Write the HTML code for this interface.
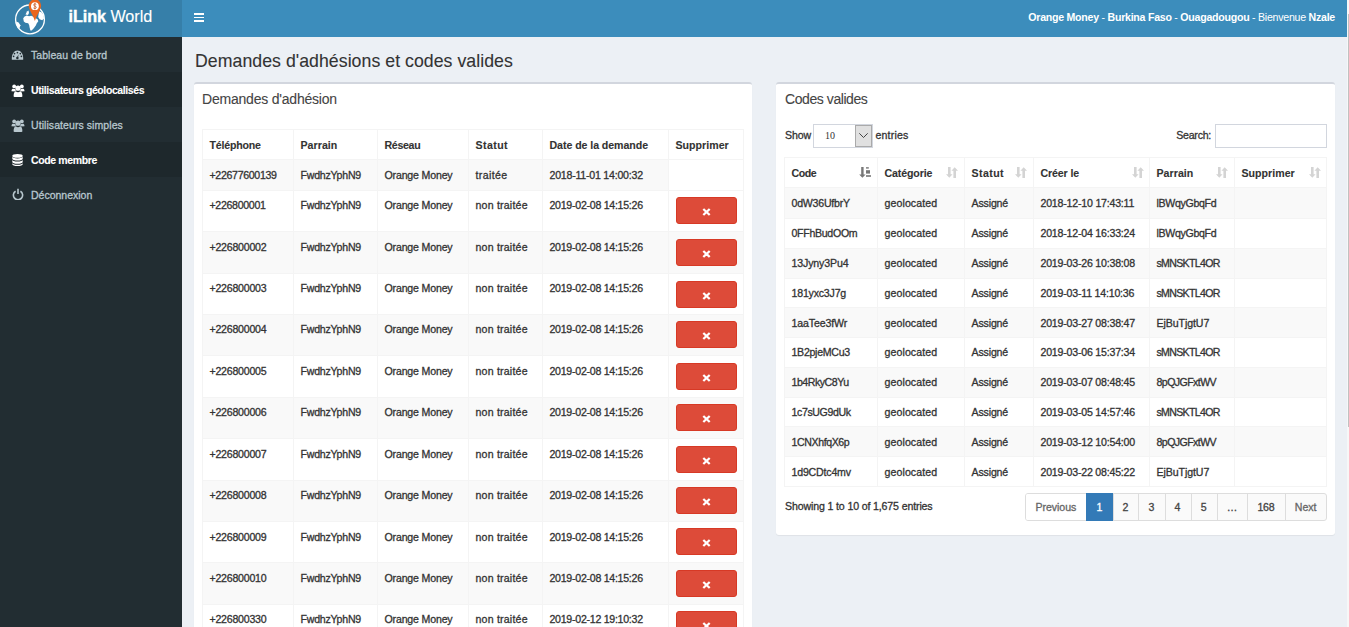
<!DOCTYPE html>
<html><head><meta charset="utf-8"><title>iLink World</title>
<style>
html,body{margin:0;padding:0;width:1349px;height:627px;overflow:hidden;background:#ecf0f5;font-family:"Liberation Sans", sans-serif}
.t{position:absolute;white-space:nowrap;-webkit-text-stroke:0.3px currentColor}
.t b{-webkit-text-stroke:0}
</style></head><body>
<div style="position:absolute;left:0px;top:0px;width:182px;height:37px;background:#367fa9"></div><div style="position:absolute;left:182px;top:0px;width:1165px;height:37px;background:#3c8dbc"></div><div style="position:absolute;left:1347px;top:0px;width:2px;height:627px;background:#f7f7f7"></div><div style="position:absolute;left:1348px;top:14px;width:1px;height:413px;background:#c1c1c1"></div><svg style="position:absolute;left:0px;top:0px" width="60" height="37" viewBox="0 0 60 37">
<circle cx="30" cy="19.4" r="14.4" fill="none" stroke="#fff" stroke-width="1.3"/>
<path d="M23.2 18.2 L24.6 16.4 L26.8 15.6 L29 16.2 L31.2 15.8 L33.4 16.8 L35.6 18.2 L37.6 19.2 L38.3 21.2 L36.8 23.2 L35.8 25.6 L33.8 28.2 L31.6 30.4 L30.4 30.4 L29.6 27.6 L29.2 25.2 L28.2 23.2 L25.4 22.8 L23.8 21.4 Z" fill="#fff"/>
<path d="M25.5 14.5 L27 11.5 L28.5 10.5 L29 13 L28 15 Z" fill="#fff"/>
<path d="M39 11.2 L41.5 12.2 L43.6 15 L44 18.6 L42.2 20.2 L39.6 19.2 L38.2 17 Z" fill="#fff"/>
<path d="M16.2 21.6 L18.6 22.6 L20.4 25.2 L19.6 28 L17.6 27.6 L16.2 24.2 Z" fill="#fff"/>
<path d="M28.7 5.6 A6.2 6.2 0 0 1 41.1 5.6 C41.1 10 37 14.5 34.9 20.9 C32.8 14.5 28.7 10 28.7 5.6 Z" fill="#ea661d"/>
<circle cx="34.9" cy="6.2" r="3.9" fill="#fff"/>
<path d="M36.3 4.4 C35.8 3.7 33.6 3.6 33.6 5 C33.6 6.3 36.3 5.9 36.3 7.4 C36.3 8.8 34 8.7 33.4 7.9 M34.9 2.9 V9.4" fill="none" stroke="#c75a22" stroke-width="0.8"/>
</svg><div class="t" style="left:68.5px;top:8.19px;font-size:16.2px;line-height:16.2px;color:#fff;font-weight:400;letter-spacing:-0.057px;-webkit-text-stroke:0.1px currentColor;"><b style="-webkit-text-stroke:0.35px #fff">iLink</b> World</div><div style="position:absolute;left:194px;top:13px;width:10px;height:1.8px;background:#fff"></div><div style="position:absolute;left:194px;top:16.6px;width:10px;height:1.8px;background:#fff"></div><div style="position:absolute;left:194px;top:20.2px;width:10px;height:1.8px;background:#fff"></div><div class="t" style="right:14px;top:11.3px;font-size:10.6px;line-height:12px;color:#fff;letter-spacing:-0.25px;-webkit-text-stroke:0"><b>Orange Money</b> - <b>Burkina Faso</b> - <b>Ouagadougou</b> - Bienvenue <b>Nzale</b></div><div style="position:absolute;left:0px;top:37px;width:182px;height:590px;background:#222d32"></div><div class="t" style="left:31px;top:49.81px;font-size:10.5px;line-height:10.5px;color:#b8c7ce;font-weight:400;letter-spacing:0.052px;">Tableau de bord</div><div style="position:absolute;left:0px;top:72px;width:182px;height:35px;background:#1e282c"></div><div class="t" style="left:31px;top:84.81px;font-size:10.5px;line-height:10.5px;color:#fff;font-weight:700;letter-spacing:-0.400px;-webkit-text-stroke:0.1px currentColor;">Utilisateurs géolocalisés</div><div class="t" style="left:31px;top:119.81px;font-size:10.5px;line-height:10.5px;color:#b8c7ce;font-weight:400;letter-spacing:0.073px;">Utilisateurs simples</div><div style="position:absolute;left:0px;top:142px;width:182px;height:35px;background:#1e282c"></div><div class="t" style="left:31px;top:154.81px;font-size:10.5px;line-height:10.5px;color:#fff;font-weight:700;letter-spacing:-0.369px;-webkit-text-stroke:0.1px currentColor;">Code membre</div><div class="t" style="left:31px;top:189.81px;font-size:10.5px;line-height:10.5px;color:#b8c7ce;font-weight:400;letter-spacing:-0.006px;">Déconnexion</div><svg style="position:absolute;left:11px;top:50px" width="13" height="11" viewBox="0 0 13 11">
<path d="M0.8 9.8 C0.5 4 3 0.6 6.5 0.6 C10 0.6 12.5 4 12.2 9.8 Z" fill="#b8c7ce"/>
<circle cx="6.4" cy="2.6" r="0.85" fill="#222d32"/><circle cx="3.5" cy="3.6" r="0.85" fill="#222d32"/><circle cx="9.3" cy="3.6" r="0.85" fill="#222d32"/>
<circle cx="2.6" cy="6.3" r="0.85" fill="#222d32"/><circle cx="10.4" cy="6.3" r="0.85" fill="#222d32"/>
<path d="M5.9 7.6 L7.6 4.2 L7 7.9 Z" fill="#222d32"/><circle cx="6.4" cy="7.9" r="1.25" fill="#222d32"/>
</svg><svg style="position:absolute;left:11px;top:83.5px" width="14" height="13" viewBox="0 0 14 13">
<circle cx="3.2" cy="2.4" r="1.9" fill="#fff"/><circle cx="10.8" cy="2.4" r="1.9" fill="#fff"/>
<path d="M0.5 7.3 c0 -2 0.8 -2.6 1.8 -2.6 c0.6 0.4 1.3 0.5 2 0.3 c0 1 0.3 1.8 1 2.4 z" fill="#fff"/>
<path d="M13.5 7.3 c0 -2 -0.8 -2.6 -1.8 -2.6 c-0.6 0.4 -1.3 0.5 -2 0.3 c0 1 -0.3 1.8 -1 2.4 z" fill="#fff"/>
<circle cx="7" cy="4.2" r="2.6" fill="#fff"/>
<path d="M2.6 12.2 c0 -3.5 1 -4.6 2.4 -4.6 c1.2 0.8 2.8 0.8 4 0 c1.4 0 2.4 1.1 2.4 4.6 c0 0.5 -0.4 0.8 -1 0.8 h-6.8 c-0.6 0 -1 -0.3 -1 -0.8 z" fill="#fff"/>
</svg><svg style="position:absolute;left:11px;top:118.5px" width="14" height="13" viewBox="0 0 14 13">
<circle cx="3.2" cy="2.4" r="1.9" fill="#b8c7ce"/><circle cx="10.8" cy="2.4" r="1.9" fill="#b8c7ce"/>
<path d="M0.5 7.3 c0 -2 0.8 -2.6 1.8 -2.6 c0.6 0.4 1.3 0.5 2 0.3 c0 1 0.3 1.8 1 2.4 z" fill="#b8c7ce"/>
<path d="M13.5 7.3 c0 -2 -0.8 -2.6 -1.8 -2.6 c-0.6 0.4 -1.3 0.5 -2 0.3 c0 1 -0.3 1.8 -1 2.4 z" fill="#b8c7ce"/>
<circle cx="7" cy="4.2" r="2.6" fill="#b8c7ce"/>
<path d="M2.6 12.2 c0 -3.5 1 -4.6 2.4 -4.6 c1.2 0.8 2.8 0.8 4 0 c1.4 0 2.4 1.1 2.4 4.6 c0 0.5 -0.4 0.8 -1 0.8 h-6.8 c-0.6 0 -1 -0.3 -1 -0.8 z" fill="#b8c7ce"/>
</svg><svg style="position:absolute;left:11.5px;top:154px" width="11" height="12" viewBox="0 0 11 12">
<ellipse cx="5.5" cy="1.9" rx="5.2" ry="1.8" fill="#fff"/>
<path d="M0.3 2.6 v2.2 c0 1 2.3 1.8 5.2 1.8 s5.2 -0.8 5.2 -1.8 v-2.2 c0 1 -2.3 1.8 -5.2 1.8 s-5.2 -0.8 -5.2 -1.8 z" fill="#fff"/>
<path d="M0.3 5.8 v2.2 c0 1 2.3 1.8 5.2 1.8 s5.2 -0.8 5.2 -1.8 v-2.2 c0 1 -2.3 1.8 -5.2 1.8 s-5.2 -0.8 -5.2 -1.8 z" fill="#fff"/>
<path d="M0.3 9 v1.2 c0 1 2.3 1.8 5.2 1.8 s5.2 -0.8 5.2 -1.8 v-1.2 c0 1 -2.3 1.8 -5.2 1.8 s-5.2 -0.8 -5.2 -1.8 z" fill="#fff"/>
</svg><svg style="position:absolute;left:11.5px;top:188px" width="12" height="12" viewBox="0 0 12 12">
<path d="M3.6 3.2 A4.6 4.6 0 1 0 8.4 3.2" fill="none" stroke="#b8c7ce" stroke-width="1.6"/>
<line x1="6" y1="0.8" x2="6" y2="6" stroke="#b8c7ce" stroke-width="1.6"/>
</svg><div style="position:absolute;left:182px;top:37px;width:1165px;height:590px;background:#ecf0f5"></div><div class="t" style="left:195px;top:53.02px;font-size:17.7px;line-height:17.7px;color:#333;font-weight:400;letter-spacing:0.049px;-webkit-text-stroke:0.1px currentColor;">Demandes d'adhésions et codes valides</div><div style="position:absolute;left:194px;top:82px;width:558px;height:560px;background:#fff;border-top:2px solid #d2d6de;border-radius:3px;box-sizing:border-box;box-shadow:0 1px 1px rgba(0,0,0,0.06)"></div><div style="position:absolute;left:776px;top:82px;width:559px;height:453px;background:#fff;border-top:2px solid #d2d6de;border-radius:3px;box-sizing:border-box;box-shadow:0 1px 1px rgba(0,0,0,0.06)"></div><div class="t" style="left:202px;top:92.05px;font-size:14px;line-height:14px;color:#444;font-weight:400;letter-spacing:-0.209px;-webkit-text-stroke:0.1px currentColor;">Demandes d'adhésion</div><div class="t" style="left:785px;top:92.05px;font-size:14px;line-height:14px;color:#444;font-weight:400;letter-spacing:-0.426px;-webkit-text-stroke:0.1px currentColor;">Codes valides</div><div style="position:absolute;left:202px;top:159px;width:466px;height:31px;background:#f9f9f9"></div><div style="position:absolute;left:202px;top:231px;width:541px;height:42px;background:#f9f9f9"></div><div style="position:absolute;left:202px;top:314px;width:541px;height:41px;background:#f9f9f9"></div><div style="position:absolute;left:202px;top:397px;width:541px;height:41px;background:#f9f9f9"></div><div style="position:absolute;left:202px;top:480px;width:541px;height:41px;background:#f9f9f9"></div><div style="position:absolute;left:202px;top:562px;width:541px;height:42px;background:#f9f9f9"></div><div style="position:absolute;left:202px;top:129px;width:542px;height:1px;background:#f4f4f4"></div><div style="position:absolute;left:202px;top:159px;width:542px;height:1px;background:#f4f4f4"></div><div style="position:absolute;left:202px;top:190px;width:542px;height:1px;background:#f4f4f4"></div><div style="position:absolute;left:202px;top:231px;width:542px;height:1px;background:#f4f4f4"></div><div style="position:absolute;left:202px;top:273px;width:542px;height:1px;background:#f4f4f4"></div><div style="position:absolute;left:202px;top:314px;width:542px;height:1px;background:#f4f4f4"></div><div style="position:absolute;left:202px;top:355px;width:542px;height:1px;background:#f4f4f4"></div><div style="position:absolute;left:202px;top:397px;width:542px;height:1px;background:#f4f4f4"></div><div style="position:absolute;left:202px;top:438px;width:542px;height:1px;background:#f4f4f4"></div><div style="position:absolute;left:202px;top:480px;width:542px;height:1px;background:#f4f4f4"></div><div style="position:absolute;left:202px;top:521px;width:542px;height:1px;background:#f4f4f4"></div><div style="position:absolute;left:202px;top:562px;width:542px;height:1px;background:#f4f4f4"></div><div style="position:absolute;left:202px;top:604px;width:542px;height:1px;background:#f4f4f4"></div><div style="position:absolute;left:202px;top:645px;width:542px;height:1px;background:#f4f4f4"></div><div style="position:absolute;left:202px;top:129px;width:1px;height:498px;background:#f4f4f4"></div><div style="position:absolute;left:293px;top:129px;width:1px;height:498px;background:#f4f4f4"></div><div style="position:absolute;left:377px;top:129px;width:1px;height:498px;background:#f4f4f4"></div><div style="position:absolute;left:468px;top:129px;width:1px;height:498px;background:#f4f4f4"></div><div style="position:absolute;left:542px;top:129px;width:1px;height:498px;background:#f4f4f4"></div><div style="position:absolute;left:668px;top:129px;width:1px;height:498px;background:#f4f4f4"></div><div style="position:absolute;left:743px;top:129px;width:1px;height:498px;background:#f4f4f4"></div><div class="t" style="left:209.5px;top:140.33px;font-size:10.6px;line-height:10.6px;color:#333;font-weight:700;letter-spacing:-0.192px;-webkit-text-stroke:0.1px currentColor;">Téléphone</div><div class="t" style="left:300.5px;top:140.33px;font-size:10.6px;line-height:10.6px;color:#333;font-weight:700;letter-spacing:0.055px;-webkit-text-stroke:0.1px currentColor;">Parrain</div><div class="t" style="left:384.5px;top:140.33px;font-size:10.6px;line-height:10.6px;color:#333;font-weight:700;letter-spacing:-0.311px;-webkit-text-stroke:0.1px currentColor;">Réseau</div><div class="t" style="left:475.5px;top:140.33px;font-size:10.6px;line-height:10.6px;color:#333;font-weight:700;letter-spacing:0.406px;-webkit-text-stroke:0.1px currentColor;">Statut</div><div class="t" style="left:549.5px;top:140.33px;font-size:10.6px;line-height:10.6px;color:#333;font-weight:700;letter-spacing:-0.056px;-webkit-text-stroke:0.1px currentColor;">Date de la demande</div><div class="t" style="left:675.5px;top:140.33px;font-size:10.6px;line-height:10.6px;color:#333;font-weight:700;letter-spacing:0.033px;-webkit-text-stroke:0.1px currentColor;">Supprimer</div><div class="t" style="left:209.5px;top:170.03px;font-size:10.6px;line-height:10.6px;color:#333;font-weight:400;letter-spacing:-0.323px;">+22677600139</div><div class="t" style="left:300.5px;top:170.03px;font-size:10.6px;line-height:10.6px;color:#333;font-weight:400;letter-spacing:-0.229px;">FwdhzYphN9</div><div class="t" style="left:384.5px;top:170.03px;font-size:10.6px;line-height:10.6px;color:#333;font-weight:400;letter-spacing:-0.175px;">Orange Money</div><div class="t" style="left:475.5px;top:170.03px;font-size:10.6px;line-height:10.6px;color:#333;font-weight:400;letter-spacing:0.382px;">traitée</div><div class="t" style="left:549.5px;top:170.03px;font-size:10.6px;line-height:10.6px;color:#333;font-weight:400;letter-spacing:-0.225px;">2018-11-01 14:00:32</div><div class="t" style="left:209.5px;top:200.03px;font-size:10.6px;line-height:10.6px;color:#333;font-weight:400;letter-spacing:-0.319px;">+226800001</div><div class="t" style="left:300.5px;top:200.03px;font-size:10.6px;line-height:10.6px;color:#333;font-weight:400;letter-spacing:-0.229px;">FwdhzYphN9</div><div class="t" style="left:384.5px;top:200.03px;font-size:10.6px;line-height:10.6px;color:#333;font-weight:400;letter-spacing:-0.175px;">Orange Money</div><div class="t" style="left:475.5px;top:200.03px;font-size:10.6px;line-height:10.6px;color:#333;font-weight:400;letter-spacing:0.199px;">non traitée</div><div class="t" style="left:549.5px;top:200.03px;font-size:10.6px;line-height:10.6px;color:#333;font-weight:400;letter-spacing:-0.268px;">2019-02-08 14:15:26</div><div style="position:absolute;left:676px;top:197.00px;width:61px;height:27px;box-sizing:border-box;background:#dd4b39;border:1px solid #d73925;border-radius:3px"></div><svg style="position:absolute;left:701.5px;top:207.50px" width="9" height="8" viewBox="0 0 9 8"><path d="M1.3 1 L7.7 7 M7.7 1 L1.3 7" stroke="#fff" stroke-width="2.3" stroke-linecap="butt"/></svg><div class="t" style="left:209.5px;top:242.03px;font-size:10.6px;line-height:10.6px;color:#333;font-weight:400;letter-spacing:-0.237px;">+226800002</div><div class="t" style="left:300.5px;top:242.03px;font-size:10.6px;line-height:10.6px;color:#333;font-weight:400;letter-spacing:-0.229px;">FwdhzYphN9</div><div class="t" style="left:384.5px;top:242.03px;font-size:10.6px;line-height:10.6px;color:#333;font-weight:400;letter-spacing:-0.175px;">Orange Money</div><div class="t" style="left:475.5px;top:242.03px;font-size:10.6px;line-height:10.6px;color:#333;font-weight:400;letter-spacing:0.199px;">non traitée</div><div class="t" style="left:549.5px;top:242.03px;font-size:10.6px;line-height:10.6px;color:#333;font-weight:400;letter-spacing:-0.268px;">2019-02-08 14:15:26</div><div style="position:absolute;left:676px;top:239.00px;width:61px;height:27px;box-sizing:border-box;background:#dd4b39;border:1px solid #d73925;border-radius:3px"></div><svg style="position:absolute;left:701.5px;top:249.50px" width="9" height="8" viewBox="0 0 9 8"><path d="M1.3 1 L7.7 7 M7.7 1 L1.3 7" stroke="#fff" stroke-width="2.3" stroke-linecap="butt"/></svg><div class="t" style="left:209.5px;top:283.03px;font-size:10.6px;line-height:10.6px;color:#333;font-weight:400;letter-spacing:-0.237px;">+226800003</div><div class="t" style="left:300.5px;top:283.03px;font-size:10.6px;line-height:10.6px;color:#333;font-weight:400;letter-spacing:-0.229px;">FwdhzYphN9</div><div class="t" style="left:384.5px;top:283.03px;font-size:10.6px;line-height:10.6px;color:#333;font-weight:400;letter-spacing:-0.175px;">Orange Money</div><div class="t" style="left:475.5px;top:283.03px;font-size:10.6px;line-height:10.6px;color:#333;font-weight:400;letter-spacing:0.199px;">non traitée</div><div class="t" style="left:549.5px;top:283.03px;font-size:10.6px;line-height:10.6px;color:#333;font-weight:400;letter-spacing:-0.268px;">2019-02-08 14:15:26</div><div style="position:absolute;left:676px;top:281.00px;width:61px;height:27px;box-sizing:border-box;background:#dd4b39;border:1px solid #d73925;border-radius:3px"></div><svg style="position:absolute;left:701.5px;top:291.50px" width="9" height="8" viewBox="0 0 9 8"><path d="M1.3 1 L7.7 7 M7.7 1 L1.3 7" stroke="#fff" stroke-width="2.3" stroke-linecap="butt"/></svg><div class="t" style="left:209.5px;top:324.03px;font-size:10.6px;line-height:10.6px;color:#333;font-weight:400;letter-spacing:-0.237px;">+226800004</div><div class="t" style="left:300.5px;top:324.03px;font-size:10.6px;line-height:10.6px;color:#333;font-weight:400;letter-spacing:-0.229px;">FwdhzYphN9</div><div class="t" style="left:384.5px;top:324.03px;font-size:10.6px;line-height:10.6px;color:#333;font-weight:400;letter-spacing:-0.175px;">Orange Money</div><div class="t" style="left:475.5px;top:324.03px;font-size:10.6px;line-height:10.6px;color:#333;font-weight:400;letter-spacing:0.199px;">non traitée</div><div class="t" style="left:549.5px;top:324.03px;font-size:10.6px;line-height:10.6px;color:#333;font-weight:400;letter-spacing:-0.268px;">2019-02-08 14:15:26</div><div style="position:absolute;left:676px;top:321.00px;width:61px;height:27px;box-sizing:border-box;background:#dd4b39;border:1px solid #d73925;border-radius:3px"></div><svg style="position:absolute;left:701.5px;top:331.50px" width="9" height="8" viewBox="0 0 9 8"><path d="M1.3 1 L7.7 7 M7.7 1 L1.3 7" stroke="#fff" stroke-width="2.3" stroke-linecap="butt"/></svg><div class="t" style="left:209.5px;top:366.03px;font-size:10.6px;line-height:10.6px;color:#333;font-weight:400;letter-spacing:-0.237px;">+226800005</div><div class="t" style="left:300.5px;top:366.03px;font-size:10.6px;line-height:10.6px;color:#333;font-weight:400;letter-spacing:-0.229px;">FwdhzYphN9</div><div class="t" style="left:384.5px;top:366.03px;font-size:10.6px;line-height:10.6px;color:#333;font-weight:400;letter-spacing:-0.175px;">Orange Money</div><div class="t" style="left:475.5px;top:366.03px;font-size:10.6px;line-height:10.6px;color:#333;font-weight:400;letter-spacing:0.199px;">non traitée</div><div class="t" style="left:549.5px;top:366.03px;font-size:10.6px;line-height:10.6px;color:#333;font-weight:400;letter-spacing:-0.268px;">2019-02-08 14:15:26</div><div style="position:absolute;left:676px;top:363.00px;width:61px;height:27px;box-sizing:border-box;background:#dd4b39;border:1px solid #d73925;border-radius:3px"></div><svg style="position:absolute;left:701.5px;top:373.50px" width="9" height="8" viewBox="0 0 9 8"><path d="M1.3 1 L7.7 7 M7.7 1 L1.3 7" stroke="#fff" stroke-width="2.3" stroke-linecap="butt"/></svg><div class="t" style="left:209.5px;top:407.03px;font-size:10.6px;line-height:10.6px;color:#333;font-weight:400;letter-spacing:-0.237px;">+226800006</div><div class="t" style="left:300.5px;top:407.03px;font-size:10.6px;line-height:10.6px;color:#333;font-weight:400;letter-spacing:-0.229px;">FwdhzYphN9</div><div class="t" style="left:384.5px;top:407.03px;font-size:10.6px;line-height:10.6px;color:#333;font-weight:400;letter-spacing:-0.175px;">Orange Money</div><div class="t" style="left:475.5px;top:407.03px;font-size:10.6px;line-height:10.6px;color:#333;font-weight:400;letter-spacing:0.199px;">non traitée</div><div class="t" style="left:549.5px;top:407.03px;font-size:10.6px;line-height:10.6px;color:#333;font-weight:400;letter-spacing:-0.268px;">2019-02-08 14:15:26</div><div style="position:absolute;left:676px;top:404.00px;width:61px;height:27px;box-sizing:border-box;background:#dd4b39;border:1px solid #d73925;border-radius:3px"></div><svg style="position:absolute;left:701.5px;top:414.50px" width="9" height="8" viewBox="0 0 9 8"><path d="M1.3 1 L7.7 7 M7.7 1 L1.3 7" stroke="#fff" stroke-width="2.3" stroke-linecap="butt"/></svg><div class="t" style="left:209.5px;top:449.03px;font-size:10.6px;line-height:10.6px;color:#333;font-weight:400;letter-spacing:-0.237px;">+226800007</div><div class="t" style="left:300.5px;top:449.03px;font-size:10.6px;line-height:10.6px;color:#333;font-weight:400;letter-spacing:-0.229px;">FwdhzYphN9</div><div class="t" style="left:384.5px;top:449.03px;font-size:10.6px;line-height:10.6px;color:#333;font-weight:400;letter-spacing:-0.175px;">Orange Money</div><div class="t" style="left:475.5px;top:449.03px;font-size:10.6px;line-height:10.6px;color:#333;font-weight:400;letter-spacing:0.199px;">non traitée</div><div class="t" style="left:549.5px;top:449.03px;font-size:10.6px;line-height:10.6px;color:#333;font-weight:400;letter-spacing:-0.268px;">2019-02-08 14:15:26</div><div style="position:absolute;left:676px;top:446.00px;width:61px;height:27px;box-sizing:border-box;background:#dd4b39;border:1px solid #d73925;border-radius:3px"></div><svg style="position:absolute;left:701.5px;top:456.50px" width="9" height="8" viewBox="0 0 9 8"><path d="M1.3 1 L7.7 7 M7.7 1 L1.3 7" stroke="#fff" stroke-width="2.3" stroke-linecap="butt"/></svg><div class="t" style="left:209.5px;top:490.03px;font-size:10.6px;line-height:10.6px;color:#333;font-weight:400;letter-spacing:-0.237px;">+226800008</div><div class="t" style="left:300.5px;top:490.03px;font-size:10.6px;line-height:10.6px;color:#333;font-weight:400;letter-spacing:-0.229px;">FwdhzYphN9</div><div class="t" style="left:384.5px;top:490.03px;font-size:10.6px;line-height:10.6px;color:#333;font-weight:400;letter-spacing:-0.175px;">Orange Money</div><div class="t" style="left:475.5px;top:490.03px;font-size:10.6px;line-height:10.6px;color:#333;font-weight:400;letter-spacing:0.199px;">non traitée</div><div class="t" style="left:549.5px;top:490.03px;font-size:10.6px;line-height:10.6px;color:#333;font-weight:400;letter-spacing:-0.268px;">2019-02-08 14:15:26</div><div style="position:absolute;left:676px;top:487.00px;width:61px;height:27px;box-sizing:border-box;background:#dd4b39;border:1px solid #d73925;border-radius:3px"></div><svg style="position:absolute;left:701.5px;top:497.50px" width="9" height="8" viewBox="0 0 9 8"><path d="M1.3 1 L7.7 7 M7.7 1 L1.3 7" stroke="#fff" stroke-width="2.3" stroke-linecap="butt"/></svg><div class="t" style="left:209.5px;top:532.03px;font-size:10.6px;line-height:10.6px;color:#333;font-weight:400;letter-spacing:-0.237px;">+226800009</div><div class="t" style="left:300.5px;top:532.03px;font-size:10.6px;line-height:10.6px;color:#333;font-weight:400;letter-spacing:-0.229px;">FwdhzYphN9</div><div class="t" style="left:384.5px;top:532.03px;font-size:10.6px;line-height:10.6px;color:#333;font-weight:400;letter-spacing:-0.175px;">Orange Money</div><div class="t" style="left:475.5px;top:532.03px;font-size:10.6px;line-height:10.6px;color:#333;font-weight:400;letter-spacing:0.199px;">non traitée</div><div class="t" style="left:549.5px;top:532.03px;font-size:10.6px;line-height:10.6px;color:#333;font-weight:400;letter-spacing:-0.268px;">2019-02-08 14:15:26</div><div style="position:absolute;left:676px;top:528.00px;width:61px;height:27px;box-sizing:border-box;background:#dd4b39;border:1px solid #d73925;border-radius:3px"></div><svg style="position:absolute;left:701.5px;top:538.50px" width="9" height="8" viewBox="0 0 9 8"><path d="M1.3 1 L7.7 7 M7.7 1 L1.3 7" stroke="#fff" stroke-width="2.3" stroke-linecap="butt"/></svg><div class="t" style="left:209.5px;top:573.03px;font-size:10.6px;line-height:10.6px;color:#333;font-weight:400;letter-spacing:-0.237px;">+226800010</div><div class="t" style="left:300.5px;top:573.03px;font-size:10.6px;line-height:10.6px;color:#333;font-weight:400;letter-spacing:-0.229px;">FwdhzYphN9</div><div class="t" style="left:384.5px;top:573.03px;font-size:10.6px;line-height:10.6px;color:#333;font-weight:400;letter-spacing:-0.175px;">Orange Money</div><div class="t" style="left:475.5px;top:573.03px;font-size:10.6px;line-height:10.6px;color:#333;font-weight:400;letter-spacing:0.199px;">non traitée</div><div class="t" style="left:549.5px;top:573.03px;font-size:10.6px;line-height:10.6px;color:#333;font-weight:400;letter-spacing:-0.268px;">2019-02-08 14:15:26</div><div style="position:absolute;left:676px;top:570.00px;width:61px;height:27px;box-sizing:border-box;background:#dd4b39;border:1px solid #d73925;border-radius:3px"></div><svg style="position:absolute;left:701.5px;top:580.50px" width="9" height="8" viewBox="0 0 9 8"><path d="M1.3 1 L7.7 7 M7.7 1 L1.3 7" stroke="#fff" stroke-width="2.3" stroke-linecap="butt"/></svg><div class="t" style="left:209.5px;top:614.03px;font-size:10.6px;line-height:10.6px;color:#333;font-weight:400;letter-spacing:-0.237px;">+226800330</div><div class="t" style="left:300.5px;top:614.03px;font-size:10.6px;line-height:10.6px;color:#333;font-weight:400;letter-spacing:-0.229px;">FwdhzYphN9</div><div class="t" style="left:384.5px;top:614.03px;font-size:10.6px;line-height:10.6px;color:#333;font-weight:400;letter-spacing:-0.175px;">Orange Money</div><div class="t" style="left:475.5px;top:614.03px;font-size:10.6px;line-height:10.6px;color:#333;font-weight:400;letter-spacing:0.199px;">non traitée</div><div class="t" style="left:549.5px;top:614.03px;font-size:10.6px;line-height:10.6px;color:#333;font-weight:400;letter-spacing:-0.268px;">2019-02-12 19:10:32</div><div style="position:absolute;left:676px;top:611.00px;width:61px;height:27px;box-sizing:border-box;background:#dd4b39;border:1px solid #d73925;border-radius:3px"></div><svg style="position:absolute;left:701.5px;top:621.50px" width="9" height="8" viewBox="0 0 9 8"><path d="M1.3 1 L7.7 7 M7.7 1 L1.3 7" stroke="#fff" stroke-width="2.3" stroke-linecap="butt"/></svg><div class="t" style="left:785px;top:130.03px;font-size:10.6px;line-height:10.6px;color:#333;font-weight:400;letter-spacing:-0.117px;">Show</div><div style="position:absolute;left:813px;top:124px;width:60px;height:24px;box-sizing:border-box;border:1px solid #d2d6de;background:#fff"></div><div style="position:absolute;left:855px;top:125px;width:17px;height:22px;box-sizing:border-box;border:1px solid #aaa;background:#e0e0e0"></div><svg style="position:absolute;left:859px;top:133px" width="9" height="5" viewBox="0 0 9 5"><path d="M0.3 0.3 L4.5 4.5 L8.7 0.3" fill="none" stroke="#333" stroke-width="0.9"/></svg><div class="t" style="left:825px;top:131px;font-family:'Liberation Serif',serif;font-size:10px;line-height:10px;color:#333;-webkit-text-stroke:0">10</div><div class="t" style="left:875.5px;top:130.03px;font-size:10.6px;line-height:10.6px;color:#333;font-weight:400;letter-spacing:0.159px;">entries</div><div class="t" style="left:1176.3px;top:130.03px;font-size:10.6px;line-height:10.6px;color:#333;font-weight:400;letter-spacing:-0.261px;">Search:</div><div style="position:absolute;left:1215px;top:124px;width:112px;height:24px;box-sizing:border-box;border:1px solid #d2d6de;background:#fff"></div><div style="position:absolute;left:784px;top:187px;width:542px;height:31px;background:#f9f9f9"></div><div style="position:absolute;left:784px;top:248px;width:542px;height:30px;background:#f9f9f9"></div><div style="position:absolute;left:784px;top:307px;width:542px;height:30px;background:#f9f9f9"></div><div style="position:absolute;left:784px;top:367px;width:542px;height:30px;background:#f9f9f9"></div><div style="position:absolute;left:784px;top:426px;width:542px;height:30px;background:#f9f9f9"></div><div style="position:absolute;left:784px;top:157px;width:543px;height:1px;background:#f4f4f4"></div><div style="position:absolute;left:784px;top:187px;width:543px;height:1px;background:#f4f4f4"></div><div style="position:absolute;left:784px;top:218px;width:543px;height:1px;background:#f4f4f4"></div><div style="position:absolute;left:784px;top:248px;width:543px;height:1px;background:#f4f4f4"></div><div style="position:absolute;left:784px;top:278px;width:543px;height:1px;background:#f4f4f4"></div><div style="position:absolute;left:784px;top:307px;width:543px;height:1px;background:#f4f4f4"></div><div style="position:absolute;left:784px;top:337px;width:543px;height:1px;background:#f4f4f4"></div><div style="position:absolute;left:784px;top:367px;width:543px;height:1px;background:#f4f4f4"></div><div style="position:absolute;left:784px;top:397px;width:543px;height:1px;background:#f4f4f4"></div><div style="position:absolute;left:784px;top:426px;width:543px;height:1px;background:#f4f4f4"></div><div style="position:absolute;left:784px;top:456px;width:543px;height:1px;background:#f4f4f4"></div><div style="position:absolute;left:784px;top:486px;width:543px;height:1px;background:#f4f4f4"></div><div style="position:absolute;left:784px;top:157px;width:1px;height:329px;background:#f4f4f4"></div><div style="position:absolute;left:877px;top:157px;width:1px;height:329px;background:#f4f4f4"></div><div style="position:absolute;left:964px;top:157px;width:1px;height:329px;background:#f4f4f4"></div><div style="position:absolute;left:1033px;top:157px;width:1px;height:329px;background:#f4f4f4"></div><div style="position:absolute;left:1149px;top:157px;width:1px;height:329px;background:#f4f4f4"></div><div style="position:absolute;left:1234px;top:157px;width:1px;height:329px;background:#f4f4f4"></div><div style="position:absolute;left:1326px;top:157px;width:1px;height:329px;background:#f4f4f4"></div><div class="t" style="left:791.5px;top:168.03px;font-size:10.6px;line-height:10.6px;color:#333;font-weight:700;letter-spacing:-0.412px;-webkit-text-stroke:0.1px currentColor;">Code</div><div class="t" style="left:884.5px;top:168.03px;font-size:10.6px;line-height:10.6px;color:#333;font-weight:700;letter-spacing:-0.116px;-webkit-text-stroke:0.1px currentColor;">Catégorie</div><div class="t" style="left:971.5px;top:168.03px;font-size:10.6px;line-height:10.6px;color:#333;font-weight:700;letter-spacing:0.406px;-webkit-text-stroke:0.1px currentColor;">Statut</div><div class="t" style="left:1040.5px;top:168.03px;font-size:10.6px;line-height:10.6px;color:#333;font-weight:700;letter-spacing:-0.117px;-webkit-text-stroke:0.1px currentColor;">Créer le</div><div class="t" style="left:1156.5px;top:168.03px;font-size:10.6px;line-height:10.6px;color:#333;font-weight:700;letter-spacing:0.055px;-webkit-text-stroke:0.1px currentColor;">Parrain</div><div class="t" style="left:1241.5px;top:168.03px;font-size:10.6px;line-height:10.6px;color:#333;font-weight:700;letter-spacing:0.033px;-webkit-text-stroke:0.1px currentColor;">Supprimer</div><div class="t" style="left:791.5px;top:198.03px;font-size:10.6px;line-height:10.6px;color:#333;font-weight:400;letter-spacing:-0.234px;">0dW36UfbrY</div><div class="t" style="left:884.5px;top:198.03px;font-size:10.6px;line-height:10.6px;color:#333;font-weight:400;letter-spacing:0.089px;">geolocated</div><div class="t" style="left:971.5px;top:198.03px;font-size:10.6px;line-height:10.6px;color:#333;font-weight:400;letter-spacing:-0.159px;">Assigné</div><div class="t" style="left:1040.5px;top:198.03px;font-size:10.6px;line-height:10.6px;color:#333;font-weight:400;letter-spacing:-0.205px;">2018-12-10 17:43:11</div><div class="t" style="left:1156.5px;top:198.03px;font-size:10.6px;line-height:10.6px;color:#333;font-weight:400;letter-spacing:-0.317px;">lBWqyGbqFd</div><div class="t" style="left:791.5px;top:228.03px;font-size:10.6px;line-height:10.6px;color:#333;font-weight:400;letter-spacing:-0.305px;">0FFhBudOOm</div><div class="t" style="left:884.5px;top:228.03px;font-size:10.6px;line-height:10.6px;color:#333;font-weight:400;letter-spacing:0.089px;">geolocated</div><div class="t" style="left:971.5px;top:228.03px;font-size:10.6px;line-height:10.6px;color:#333;font-weight:400;letter-spacing:-0.159px;">Assigné</div><div class="t" style="left:1040.5px;top:228.03px;font-size:10.6px;line-height:10.6px;color:#333;font-weight:400;letter-spacing:-0.207px;">2018-12-04 16:33:24</div><div class="t" style="left:1156.5px;top:228.03px;font-size:10.6px;line-height:10.6px;color:#333;font-weight:400;letter-spacing:-0.317px;">lBWqyGbqFd</div><div class="t" style="left:791.5px;top:258.03px;font-size:10.6px;line-height:10.6px;color:#333;font-weight:400;letter-spacing:-0.140px;">13Jyny3Pu4</div><div class="t" style="left:884.5px;top:258.03px;font-size:10.6px;line-height:10.6px;color:#333;font-weight:400;letter-spacing:0.089px;">geolocated</div><div class="t" style="left:971.5px;top:258.03px;font-size:10.6px;line-height:10.6px;color:#333;font-weight:400;letter-spacing:-0.159px;">Assigné</div><div class="t" style="left:1040.5px;top:258.03px;font-size:10.6px;line-height:10.6px;color:#333;font-weight:400;letter-spacing:-0.207px;">2019-03-26 10:38:08</div><div class="t" style="left:1156.5px;top:258.03px;font-size:10.6px;line-height:10.6px;color:#333;font-weight:400;letter-spacing:-0.679px;">sMNSKTL4OR</div><div class="t" style="left:791.5px;top:288.03px;font-size:10.6px;line-height:10.6px;color:#333;font-weight:400;letter-spacing:-0.200px;">181yxc3J7g</div><div class="t" style="left:884.5px;top:288.03px;font-size:10.6px;line-height:10.6px;color:#333;font-weight:400;letter-spacing:0.089px;">geolocated</div><div class="t" style="left:971.5px;top:288.03px;font-size:10.6px;line-height:10.6px;color:#333;font-weight:400;letter-spacing:-0.159px;">Assigné</div><div class="t" style="left:1040.5px;top:288.03px;font-size:10.6px;line-height:10.6px;color:#333;font-weight:400;letter-spacing:-0.205px;">2019-03-11 14:10:36</div><div class="t" style="left:1156.5px;top:288.03px;font-size:10.6px;line-height:10.6px;color:#333;font-weight:400;letter-spacing:-0.679px;">sMNSKTL4OR</div><div class="t" style="left:791.5px;top:318.03px;font-size:10.6px;line-height:10.6px;color:#333;font-weight:400;letter-spacing:-0.132px;">1aaTee3fWr</div><div class="t" style="left:884.5px;top:318.03px;font-size:10.6px;line-height:10.6px;color:#333;font-weight:400;letter-spacing:0.089px;">geolocated</div><div class="t" style="left:971.5px;top:318.03px;font-size:10.6px;line-height:10.6px;color:#333;font-weight:400;letter-spacing:-0.159px;">Assigné</div><div class="t" style="left:1040.5px;top:318.03px;font-size:10.6px;line-height:10.6px;color:#333;font-weight:400;letter-spacing:-0.207px;">2019-03-27 08:38:47</div><div class="t" style="left:1156.5px;top:318.03px;font-size:10.6px;line-height:10.6px;color:#333;font-weight:400;letter-spacing:-0.083px;">EjBuTjgtU7</div><div class="t" style="left:791.5px;top:347.03px;font-size:10.6px;line-height:10.6px;color:#333;font-weight:400;letter-spacing:-0.289px;">1B2pjeMCu3</div><div class="t" style="left:884.5px;top:347.03px;font-size:10.6px;line-height:10.6px;color:#333;font-weight:400;letter-spacing:0.089px;">geolocated</div><div class="t" style="left:971.5px;top:347.03px;font-size:10.6px;line-height:10.6px;color:#333;font-weight:400;letter-spacing:-0.159px;">Assigné</div><div class="t" style="left:1040.5px;top:347.03px;font-size:10.6px;line-height:10.6px;color:#333;font-weight:400;letter-spacing:-0.207px;">2019-03-06 15:37:34</div><div class="t" style="left:1156.5px;top:347.03px;font-size:10.6px;line-height:10.6px;color:#333;font-weight:400;letter-spacing:-0.679px;">sMNSKTL4OR</div><div class="t" style="left:791.5px;top:377.03px;font-size:10.6px;line-height:10.6px;color:#333;font-weight:400;letter-spacing:-0.466px;">1b4RkyC8Yu</div><div class="t" style="left:884.5px;top:377.03px;font-size:10.6px;line-height:10.6px;color:#333;font-weight:400;letter-spacing:0.089px;">geolocated</div><div class="t" style="left:971.5px;top:377.03px;font-size:10.6px;line-height:10.6px;color:#333;font-weight:400;letter-spacing:-0.159px;">Assigné</div><div class="t" style="left:1040.5px;top:377.03px;font-size:10.6px;line-height:10.6px;color:#333;font-weight:400;letter-spacing:-0.207px;">2019-03-07 08:48:45</div><div class="t" style="left:1156.5px;top:377.03px;font-size:10.6px;line-height:10.6px;color:#333;font-weight:400;letter-spacing:-0.577px;">8pQJGFxtWV</div><div class="t" style="left:791.5px;top:407.03px;font-size:10.6px;line-height:10.6px;color:#333;font-weight:400;letter-spacing:-0.384px;">1c7sUG9dUk</div><div class="t" style="left:884.5px;top:407.03px;font-size:10.6px;line-height:10.6px;color:#333;font-weight:400;letter-spacing:0.089px;">geolocated</div><div class="t" style="left:971.5px;top:407.03px;font-size:10.6px;line-height:10.6px;color:#333;font-weight:400;letter-spacing:-0.159px;">Assigné</div><div class="t" style="left:1040.5px;top:407.03px;font-size:10.6px;line-height:10.6px;color:#333;font-weight:400;letter-spacing:-0.207px;">2019-03-05 14:57:46</div><div class="t" style="left:1156.5px;top:407.03px;font-size:10.6px;line-height:10.6px;color:#333;font-weight:400;letter-spacing:-0.679px;">sMNSKTL4OR</div><div class="t" style="left:791.5px;top:437.03px;font-size:10.6px;line-height:10.6px;color:#333;font-weight:400;letter-spacing:-0.400px;">1CNXhfqX6p</div><div class="t" style="left:884.5px;top:437.03px;font-size:10.6px;line-height:10.6px;color:#333;font-weight:400;letter-spacing:0.089px;">geolocated</div><div class="t" style="left:971.5px;top:437.03px;font-size:10.6px;line-height:10.6px;color:#333;font-weight:400;letter-spacing:-0.159px;">Assigné</div><div class="t" style="left:1040.5px;top:437.03px;font-size:10.6px;line-height:10.6px;color:#333;font-weight:400;letter-spacing:-0.207px;">2019-03-12 10:54:00</div><div class="t" style="left:1156.5px;top:437.03px;font-size:10.6px;line-height:10.6px;color:#333;font-weight:400;letter-spacing:-0.577px;">8pQJGFxtWV</div><div class="t" style="left:791.5px;top:467.03px;font-size:10.6px;line-height:10.6px;color:#333;font-weight:400;letter-spacing:-0.187px;">1d9CDtc4mv</div><div class="t" style="left:884.5px;top:467.03px;font-size:10.6px;line-height:10.6px;color:#333;font-weight:400;letter-spacing:0.089px;">geolocated</div><div class="t" style="left:971.5px;top:467.03px;font-size:10.6px;line-height:10.6px;color:#333;font-weight:400;letter-spacing:-0.159px;">Assigné</div><div class="t" style="left:1040.5px;top:467.03px;font-size:10.6px;line-height:10.6px;color:#333;font-weight:400;letter-spacing:-0.207px;">2019-03-22 08:45:22</div><div class="t" style="left:1156.5px;top:467.03px;font-size:10.6px;line-height:10.6px;color:#333;font-weight:400;letter-spacing:-0.083px;">EjBuTjgtU7</div><svg style="position:absolute;left:859px;top:167px" width="13" height="11" viewBox="0 0 13 11">
<path d="M2.2 0 h2.4 v7.5 h2 l-3.2 3.3 l-3.2 -3.3 h2 z" fill="#777"/>
<rect x="7" y="0.2" width="2.8" height="1.4" fill="#777"/>
<rect x="7" y="3.2" width="4" height="3.4" fill="#777"/>
<rect x="7" y="8.2" width="5" height="1.6" fill="#777"/>
</svg><svg style="position:absolute;left:946px;top:167px" width="12" height="11" viewBox="0 0 12 11">
<path d="M2 0 h2.6 v7.3 h2 l-3.3 3.5 l-3.3 -3.5 h2 z" fill="#d4d4d4"/>
<path d="M7.4 11 h2.6 v-7.3 h2 l-3.3 -3.5 l-3.3 3.5 h2 z" fill="#d4d4d4"/>
</svg><svg style="position:absolute;left:1015px;top:167px" width="12" height="11" viewBox="0 0 12 11">
<path d="M2 0 h2.6 v7.3 h2 l-3.3 3.5 l-3.3 -3.5 h2 z" fill="#d4d4d4"/>
<path d="M7.4 11 h2.6 v-7.3 h2 l-3.3 -3.5 l-3.3 3.5 h2 z" fill="#d4d4d4"/>
</svg><svg style="position:absolute;left:1132px;top:167px" width="12" height="11" viewBox="0 0 12 11">
<path d="M2 0 h2.6 v7.3 h2 l-3.3 3.5 l-3.3 -3.5 h2 z" fill="#d4d4d4"/>
<path d="M7.4 11 h2.6 v-7.3 h2 l-3.3 -3.5 l-3.3 3.5 h2 z" fill="#d4d4d4"/>
</svg><svg style="position:absolute;left:1216px;top:167px" width="12" height="11" viewBox="0 0 12 11">
<path d="M2 0 h2.6 v7.3 h2 l-3.3 3.5 l-3.3 -3.5 h2 z" fill="#d4d4d4"/>
<path d="M7.4 11 h2.6 v-7.3 h2 l-3.3 -3.5 l-3.3 3.5 h2 z" fill="#d4d4d4"/>
</svg><svg style="position:absolute;left:1308.5px;top:167px" width="12" height="11" viewBox="0 0 12 11">
<path d="M2 0 h2.6 v7.3 h2 l-3.3 3.5 l-3.3 -3.5 h2 z" fill="#d4d4d4"/>
<path d="M7.4 11 h2.6 v-7.3 h2 l-3.3 -3.5 l-3.3 3.5 h2 z" fill="#d4d4d4"/>
</svg><div class="t" style="left:785px;top:501.03px;font-size:10.6px;line-height:10.6px;color:#333;font-weight:400;letter-spacing:-0.139px;">Showing 1 to 10 of 1,675 entries</div><div style="position:absolute;left:1025.4px;top:493px;width:301.39999999999986px;height:28px;box-sizing:border-box;border:1px solid #ddd;border-radius:3px;background:#fafafa"></div><div style="position:absolute;left:1026.4px;top:494px;width:59.899999999999864px;height:26px;background:#fff;border-radius:2px 0 0 2px"></div><div class="t" style="left:1025.4px;top:501px;width:60.899999999999864px;text-align:center;font-size:10.6px;line-height:12px;color:#666;letter-spacing:-0.039px">Previous</div><div style="position:absolute;left:1086.3px;top:493px;width:1px;height:28px;background:#ddd"></div><div style="position:absolute;left:1086.3px;top:493px;width:26.40000000000009px;height:28px;background:#337ab7"></div><div class="t" style="left:1086.3px;top:501px;width:26.40000000000009px;text-align:center;font-size:10.6px;line-height:12px;color:#fff">1</div><div style="position:absolute;left:1112.7px;top:493px;width:1px;height:28px;background:#ddd"></div><div class="t" style="left:1112.7px;top:501px;width:25.700000000000045px;text-align:center;font-size:10.6px;line-height:12px;color:#444">2</div><div style="position:absolute;left:1138.4px;top:493px;width:1px;height:28px;background:#ddd"></div><div class="t" style="left:1138.4px;top:501px;width:26.199999999999818px;text-align:center;font-size:10.6px;line-height:12px;color:#444">3</div><div style="position:absolute;left:1164.6px;top:493px;width:1px;height:28px;background:#ddd"></div><div class="t" style="left:1164.6px;top:501px;width:25.90000000000009px;text-align:center;font-size:10.6px;line-height:12px;color:#444">4</div><div style="position:absolute;left:1190.5px;top:493px;width:1px;height:28px;background:#ddd"></div><div class="t" style="left:1190.5px;top:501px;width:26.200000000000045px;text-align:center;font-size:10.6px;line-height:12px;color:#444">5</div><div style="position:absolute;left:1216.7px;top:493px;width:1px;height:28px;background:#ddd"></div><div class="t" style="left:1216.7px;top:501px;width:30.59999999999991px;text-align:center;font-size:10.6px;line-height:12px;color:#444">…</div><div style="position:absolute;left:1247.3px;top:493px;width:1px;height:28px;background:#ddd"></div><div class="t" style="left:1247.3px;top:501px;width:37.200000000000045px;text-align:center;font-size:10.6px;line-height:12px;color:#444;letter-spacing:-0.220px">168</div><div style="position:absolute;left:1284.5px;top:493px;width:1px;height:28px;background:#ddd"></div><div class="t" style="left:1284.5px;top:501px;width:42.299999999999955px;text-align:center;font-size:10.6px;line-height:12px;color:#666;letter-spacing:0.017px">Next</div>
</body></html>
